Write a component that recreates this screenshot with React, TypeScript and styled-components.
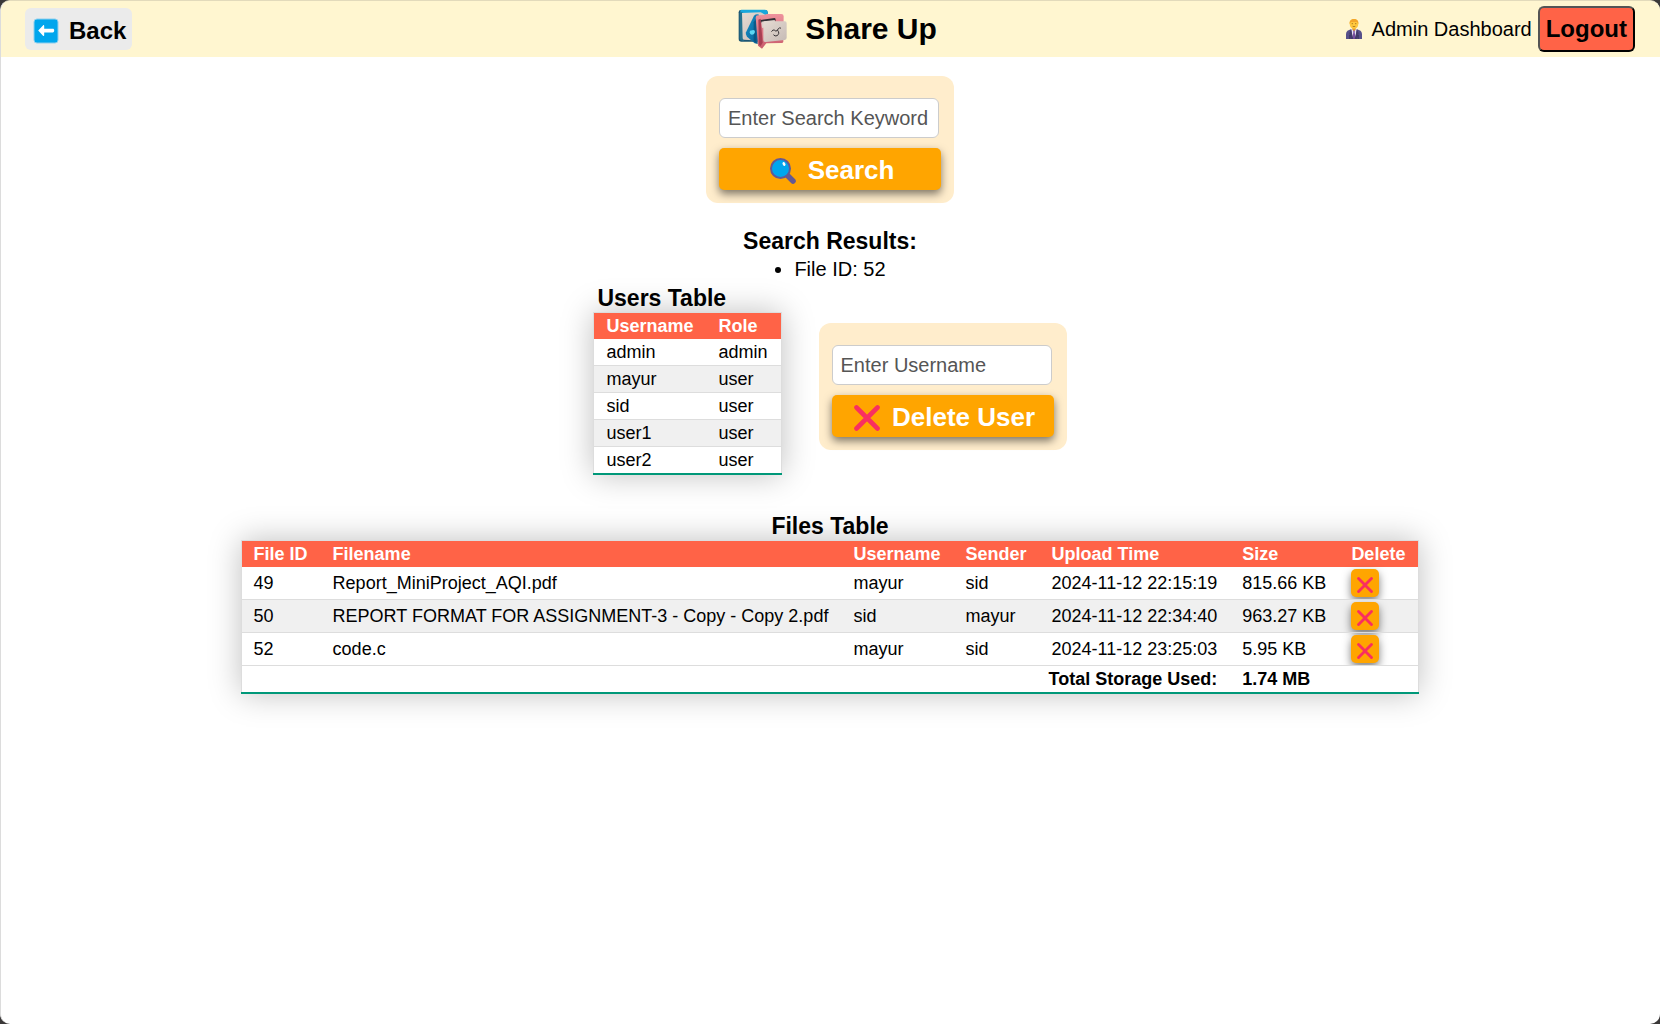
import React from "react";
import styled, { createGlobalStyle } from "styled-components";

const GlobalStyle = createGlobalStyle`
  *, *::before, *::after { box-sizing: border-box; }
  body {
    margin: 0;
    background: #3a3838;
    color: #000;
    font-family: Arial, "Liberation Sans", sans-serif;
    font-size: 20px;
  }
  button, input { font-family: inherit; }
`;

const Window = styled.div`
  min-height: 100vh;
  background: #fff;
  border-top: 1px solid #e2dabb;
  border-left: 1px solid #dcdcdc;
  border-radius: 10px;
  overflow: hidden;
`;

const Header = styled.header`
  display: grid;
  grid-template-columns: 1fr auto 1fr;
  align-items: center;
  height: 56px;
  padding: 0 25px 0 24px;
  background: #fff6d0;
`;

const BackButton = styled.button`
  justify-self: start;
  display: flex;
  align-items: center;
  gap: 10px;
  height: 42px;
  padding: 3px 6px 0 8px;
  border: 0;
  border-radius: 6px;
  background: #ebebeb;
  color: #000;
  font-size: 24px;
  font-weight: bold;
  cursor: pointer;
`;

const Brand = styled.div`
  display: flex;
  align-items: center;
  gap: 17px;
  padding-left: 15px;
`;

const BrandName = styled.h1`
  margin: 0;
  font-size: 30px;
  line-height: 34px;
`;

const Account = styled.div`
  justify-self: end;
  display: flex;
  align-items: center;
  gap: 6px;
`;

const AccountLink = styled.a`
  display: flex;
  align-items: center;
  gap: 10px;
  color: #000;
  text-decoration: none;
`;

const LogoutButton = styled.button`
  height: 46px;
  padding: 0 6px;
  border: 2px outset #000;
  border-radius: 6px;
  background: #ff6347;
  color: #000;
  font-size: 24px;
  font-weight: bold;
  cursor: pointer;
`;

const Main = styled.main`
  display: flex;
  flex-direction: column;
  align-items: center;
  padding: 19px 25px 48px 24px;
`;

const Card = styled.form`
  display: flex;
  flex-direction: column;
  gap: 10px;
  width: 248px;
  padding: 22px 13px 13px;
  border-radius: 12px;
  background: #ffedcc;
`;

const TextInput = styled.input`
  width: 220px;
  height: 40px;
  padding: 0 8px;
  border: 1px solid #ccc;
  border-radius: 6px;
  background: #fff;
  font-size: 20px;
  &::placeholder { color: #555; opacity: 1; }
`;

const ActionButton = styled.button<{ $compact?: boolean }>`
  display: flex;
  align-items: center;
  justify-content: center;
  gap: 8px;
  width: ${(p) => (p.$compact ? "28px" : "100%")};
  height: ${(p) => (p.$compact ? "28px" : "42px")};
  padding: 3px 0 0;
  border: 0;
  border-radius: 5px;
  background: #ffa500;
  box-shadow: 0 4px 8px rgba(0, 0, 0, 0.5);
  color: #fff;
  font-size: 26px;
  font-weight: bold;
  cursor: pointer;
`;

const Results = styled.section`
  margin-top: 24px;
`;

const Heading = styled.h2<{ $start?: boolean }>`
  margin: 0;
  padding-left: ${(p) => (p.$start ? "4px" : "0")};
  font-size: 23px;
  line-height: 28px;
  text-align: ${(p) => (p.$start ? "left" : "center")};
`;

const ResultList = styled.ul`
  width: fit-content;
  margin: 0 auto;
  padding: 0 0 0 20px;
  line-height: 29px;
`;

const UsersRow = styled.section`
  display: flex;
  align-items: center;
  gap: 37px;
`;

const UsersBlock = styled.div`
  padding-bottom: 14px;
`;

const FilesBlock = styled.section`
  margin-top: 23px;
`;

const DataTable = styled.table`
  border-collapse: collapse;
  border: 1px solid #ddd;
  background: #fff;
  box-shadow: 0 0 30px rgba(0, 0, 0, 0.25);
  font-size: 18px;
  line-height: 20px;
  white-space: nowrap;

  tbody tr { border-bottom: 1px solid #ddd; }
  tbody tr:nth-child(even) { background: #f0f0f0; }
  tbody tr:last-child {
    border-bottom: 2px solid #009879;
    background: #fff;
  }
`;

const HeadRow = styled.tr`
  background: #ff6347;
  color: #fff;
`;

const HeadCell = styled.th`
  padding: 3px 13px 3px 12px;
  text-align: left;
`;

const Cell = styled.td<{ $strong?: boolean; $end?: boolean }>`
  padding: 3px 13px 3px 12px;
  font-weight: ${(p) => (p.$strong ? "bold" : "normal")};
  text-align: ${(p) => (p.$end ? "right" : "left")};
`;

const ButtonCell = styled.td`
  padding: 2px 13px 2px 12px;
`;

const BackIcon = () => (
  <svg width="26" height="26" viewBox="0 0 26 26" aria-hidden="true">
    <rect x="1" y="1" width="24" height="24" rx="3" fill="#00a6ed" stroke="#8ecfee" strokeWidth="1" />
    <path d="M5.2 12.4 10 7.4c.6-.6 1.2-.3 1.2.5v2.9h8.600c.9 0 1.400.6 1.400 1.800s-.5 1.800-1.400 1.800h-8.600v2.900c0 .8-.6 1.100-1.200.5Z" fill="#fff" />
  </svg>
);

const SearchIcon = () => (
  <svg width="34" height="26" viewBox="-4 0 34 26" aria-hidden="true">
    <path d="m17 17 6 6" stroke="#635994" strokeWidth="5.500" strokeLinecap="round" />
    <circle cx="10.500" cy="10.500" r="9.500" fill="#00a6ed" stroke="#635994" strokeWidth="2" />
    <ellipse cx="14" cy="6" rx="1.300" ry="2" transform="rotate(-30 14 6)" fill="#fff" />
  </svg>
);

const CrossIcon = ({ size, box }: { size: number; box: number }) => (
  <svg width={box} height={size} viewBox={`${(size - box) * 13 / size} 0 ${(box * 26) / size} 26`} aria-hidden="true">
    <path d="m2.500 2.500 21 21M23.500 2.500l-21 21" stroke="#f92f60" strokeWidth="4.600" strokeLinecap="round" />
  </svg>
);

const AdminIcon = () => (
  <svg width="16" height="20" viewBox="0 0 48 60" aria-hidden="true">
    <path d="M0 60V45c0-8 7-12 15-14h18c8 2 15 6 15 14v15Z" fill="#56508a" />
    <path d="M16 30h16l-4 30h-8Z" fill="#e8e4f2" />
    <path d="m21 34 3-2 3 2-1 5 3 21H19l3-21Z" fill="#7a4fa0" />
    <path d="m15 31 7 29h-8L10 43ZM33 31l-7 29h8l4-17Z" fill="#433b6b" />
    <path d="M11 60V48M37 60V48" stroke="#332d52" strokeWidth="2" />
    <path d="M19 24h10v8l-5 4-5-4Z" fill="#e59a2c" />
    <path d="M11 14C11 5 16 0 24 0s13 5 13 14c0 10-6 15-13 15S11 24 11 14Z" fill="#ffc83d" />
    <path d="M11 15C9 5 16 0 24 0s15 5 13 15l-4-6H15Z" fill="#f3a62b" />
    <path d="M17 14h4M27 14h4M20 22q4 2 8 0" stroke="#8b5a18" strokeWidth="2" fill="none" />
  </svg>
);

const Logo = () => (
  <svg width="50" height="40" viewBox="54 30 150 120" aria-hidden="true">
    <defs>
      <linearGradient id="paper" x1="0" y1="0" x2="1" y2="1">
        <stop offset="0" stopColor="#e6dbd2" />
        <stop offset="1" stopColor="#c5bab5" />
      </linearGradient>
      <linearGradient id="pink" x1="0" y1="0" x2="0" y2="1">
        <stop offset="0" stopColor="#ee929c" />
        <stop offset="1" stopColor="#c95c6c" />
      </linearGradient>
      <linearGradient id="blue" x1="0" y1="0" x2="1" y2="1">
        <stop offset="0" stopColor="#1492cb" />
        <stop offset="1" stopColor="#0a5f93" />
      </linearGradient>
    </defs>
    <path d="M62 33h74q7 0 7 7v88H64q-8 0-8-8V40q0-7 6-7Z" fill="#1c5572" />
    <path d="M64 32h71q7 0 8 6v12H61V35q0-3 3-3Z" fill="#19a7dc" />
    <path d="m59 42 8-3 4 87-8-2q-4-1-4-6Z" fill="#24728f" />
    <path d="m66 42 56-2 15 8-38 76-27-2q-4 0-4-5Z" fill="url(#paper)" />
    <path d="M102 50q7-6 15-3l-4 88-9-2-23-20q-6-6-3-13Z" fill="url(#blue)" />
    <path d="m101 70 8-13v76l-8-7Z" fill="#08486f" opacity=".6" />
    <path d="m90 95 10-2q5 0 5 6l-3 6q-7 5-11 0-4-4-1-10Z" fill="#5cd8f4" />
    <path d="M107 56q0-7 7-7l19-1 7-3h44q7 0 7 7l-1 76q0 4-6 4l-45 1-13 16-12-9Z" fill="url(#pink)" />
    <path d="m115 62 7-3 6 72-6 10-5-4Z" fill="#a93f53" />
    <path d="m122 63 42-6 3 3-1 8-43 3Z" fill="#302f35" />
    <path d="m124 68 40-5 4 14-42 10Z" fill="#ddd0c9" />
    <path d="M134 67h59q7-1 7 6v43q0 6-6 7l-57 6q-7 1-7-6V73q0-5 4-6Z" fill="url(#paper)" />
    <path d="M155 97q3-6 9-4 2 7 8 1l3-5q3-4 7-2M173 94q8 10-2 16-6 3-10-2" fill="none" stroke="#383437" strokeWidth="3" strokeLinecap="round" />
  </svg>
);

const users = [
  { name: "admin", role: "admin" },
  { name: "mayur", role: "user" },
  { name: "sid", role: "user" },
  { name: "user1", role: "user" },
  { name: "user2", role: "user" },
];

const files = [
  { id: 49, name: "Report_MiniProject_AQI.pdf", user: "mayur", sender: "sid", time: "2024-11-12 22:15:19", size: "815.66 KB" },
  { id: 50, name: "REPORT FORMAT FOR ASSIGNMENT-3 - Copy - Copy 2.pdf", user: "sid", sender: "mayur", time: "2024-11-12 22:34:40", size: "963.27 KB" },
  { id: 52, name: "code.c", user: "mayur", sender: "sid", time: "2024-11-12 23:25:03", size: "5.95 KB" },
];

const fileColumns = ["File ID", "Filename", "Username", "Sender", "Upload Time", "Size", "Delete"];

const stay = (event: React.FormEvent) => event.preventDefault();

export default function App() {
  return (
    <>
      <GlobalStyle />
      <Window>
        <Header>
          <BackButton type="button">
            <BackIcon />
            Back
          </BackButton>
          <Brand>
            <Logo />
            <BrandName>Share Up</BrandName>
          </Brand>
          <Account>
            <AccountLink href="#admin">
              <AdminIcon />
              Admin Dashboard
            </AccountLink>
            <LogoutButton type="button">Logout</LogoutButton>
          </Account>
        </Header>

        <Main>
          <Card onSubmit={stay}>
            <TextInput type="text" aria-label="Search keyword" placeholder="Enter Search Keyword" />
            <ActionButton type="submit">
              <SearchIcon />
              Search
            </ActionButton>
          </Card>

          <Results>
            <Heading>Search Results:</Heading>
            <ResultList>
              <li>File ID: 52</li>
            </ResultList>
          </Results>

          <UsersRow>
            <UsersBlock>
              <Heading $start>Users Table</Heading>
              <DataTable>
                <thead>
                  <HeadRow>
                    <HeadCell scope="col">Username</HeadCell>
                    <HeadCell scope="col">Role</HeadCell>
                  </HeadRow>
                </thead>
                <tbody>
                  {users.map((user) => (
                    <tr key={user.name}>
                      <Cell>{user.name}</Cell>
                      <Cell>{user.role}</Cell>
                    </tr>
                  ))}
                </tbody>
              </DataTable>
            </UsersBlock>
            <Card onSubmit={stay}>
              <TextInput type="text" aria-label="Username to delete" placeholder="Enter Username" />
              <ActionButton type="submit">
                <CrossIcon size={26} box={34} />
                Delete User
              </ActionButton>
            </Card>
          </UsersRow>

          <FilesBlock>
            <Heading>Files Table</Heading>
            <DataTable>
              <thead>
                <HeadRow>
                  {fileColumns.map((column) => (
                    <HeadCell key={column} scope="col">{column}</HeadCell>
                  ))}
                </HeadRow>
              </thead>
              <tbody>
                {files.map((file) => (
                  <tr key={file.id}>
                    <Cell>{file.id}</Cell>
                    <Cell>{file.name}</Cell>
                    <Cell>{file.user}</Cell>
                    <Cell>{file.sender}</Cell>
                    <Cell>{file.time}</Cell>
                    <Cell>{file.size}</Cell>
                    <ButtonCell>
                      <ActionButton $compact type="button" aria-label={`Delete ${file.name}`}>
                        <CrossIcon size={16} box={16} />
                      </ActionButton>
                    </ButtonCell>
                  </tr>
                ))}
                <tr>
                  <Cell $strong $end colSpan={5}>Total Storage Used:</Cell>
                  <Cell $strong>1.74 MB</Cell>
                  <Cell />
                </tr>
              </tbody>
            </DataTable>
          </FilesBlock>
        </Main>
      </Window>
    </>
  );
}
